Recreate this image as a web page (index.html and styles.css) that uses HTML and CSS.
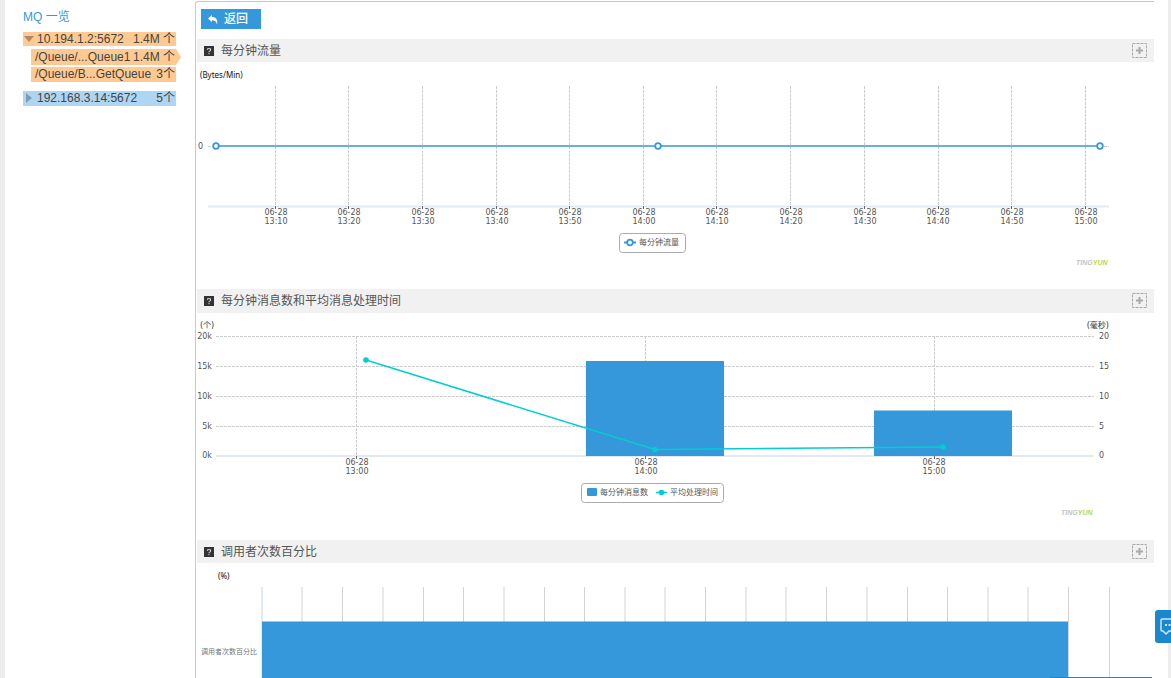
FILE: index.html
```html
<!DOCTYPE html>
<html lang="zh-CN">
<head>
<meta charset="utf-8">
<title>MQ 一览</title>
<link rel="stylesheet" href="styles.css">
</head>
<body>
<div class="page">
  <nav class="sidebar">
    <h1 class="sidebar-title">MQ 一览</h1>
    <a class="node hot" href="#"><svg class="caret" viewBox="0 0 10 10"><path d="M0 2h10L5 8z"/></svg><span class="name">10.194.1.2:5672</span><span>1.4M 个</span></a>
    <a class="node hot child current" href="#"><span class="name">/Queue/...Queue1</span><span>1.4M 个</span></a>
    <a class="node hot child" href="#"><span class="name">/Queue/B...GetQueue</span><span>3个</span></a>
    <a class="node cool" href="#"><svg class="caret" viewBox="0 0 10 10"><path d="M2 0v10l6-5z"/></svg><span class="name">192.168.3.14:5672</span><span>5个</span></a>
  </nav>
  <main class="main">
    <div class="toolbar">
      <button class="back" type="button"><svg class="back-icon" viewBox="0 0 10 10"><path d="M0 3.5 4 0v2c4 0 6 2.500 5 7.500C8.300 6.500 7 5.200 4 5.200V7z"/></svg>返回</button>
    </div>

    <section class="panel">
      <header class="bar">
        <svg class="help" viewBox="0 0 10 10"><path class="help-box" d="M0 0h10v10H0z"/><path class="help-mark" d="M3.500 3.800V2.700h3v2.100L5 5.400v.9M5 7v1.200"/></svg>
        <h2 class="bar-title">每分钟流量</h2>
        <button class="add" type="button" aria-label="添加"><svg class="add-icon" viewBox="0 0 15 15"><path class="add-box" d="M.5.5h14v14H.5z"/><path class="add-plus" d="M4 7.500h7M7.500 4v7"/></svg></button>
      </header>
      <svg class="chart" viewBox="197 62 957 227">
        <text class="unit" x="200" y="78">(Bytes/Min)</text>
        <path class="grid" d="M275.500 86V206M348.500 86V206M422.500 86V206M496.500 86V206M569.500 86V206M643.500 86V206M716.500 86V206M790.500 86V206M864.500 86V206M938.500 86V206M1011.500 86V206M1085.500 86V206M208 146.500H1109"/>
        <path class="axis" d="M208 206.500H1109"/>
        <path class="tick" d="M275.500 206v3M348.500 206v3M422.500 206v3M496.500 206v3M569.500 206v3M643.500 206v3M716.500 206v3M790.500 206v3M864.500 206v3M938.500 206v3M1011.500 206v3M1085.500 206v3"/>
        <path class="flow" d="M216 146H1100"/>
        <g class="ring"><circle cx="216" cy="146" r="2.800"/><circle cx="658" cy="146" r="2.800"/><circle cx="1100" cy="146" r="2.800"/></g>
        <text class="label" x="198" y="149">0</text>
        <g class="label mid">
          <text x="276" y="215">06-28</text><text x="276" y="224">13:10</text>
          <text x="349" y="215">06-28</text><text x="349" y="224">13:20</text>
          <text x="423" y="215">06-28</text><text x="423" y="224">13:30</text>
          <text x="497" y="215">06-28</text><text x="497" y="224">13:40</text>
          <text x="570" y="215">06-28</text><text x="570" y="224">13:50</text>
          <text x="644" y="215">06-28</text><text x="644" y="224">14:00</text>
          <text x="717" y="215">06-28</text><text x="717" y="224">14:10</text>
          <text x="791" y="215">06-28</text><text x="791" y="224">14:20</text>
          <text x="865" y="215">06-28</text><text x="865" y="224">14:30</text>
          <text x="938" y="215">06-28</text><text x="938" y="224">14:40</text>
          <text x="1012" y="215">06-28</text><text x="1012" y="224">14:50</text>
          <text x="1086" y="215">06-28</text><text x="1086" y="224">15:00</text>
        </g>
        <rect class="legend" x="619.500" y="233.500" width="66" height="19" rx="3"/>
        <path class="flow-key" d="M624 242.500h12"/>
        <g class="ring"><circle cx="630" cy="242.500" r="2.800"/></g>
        <text class="label" x="639" y="245">每分钟流量</text>
        <text class="brand" x="1076" y="265">TING<tspan class="brand-green">YUN</tspan></text>
      </svg>
    </section>

    <section class="panel">
      <header class="bar bar-tall">
        <svg class="help" viewBox="0 0 10 10"><path class="help-box" d="M0 0h10v10H0z"/><path class="help-mark" d="M3.500 3.800V2.700h3v2.100L5 5.400v.9M5 7v1.200"/></svg>
        <h2 class="bar-title">每分钟消息数和平均消息处理时间</h2>
        <button class="add" type="button" aria-label="添加"><svg class="add-icon" viewBox="0 0 15 15"><path class="add-box" d="M.5.5h14v14H.5z"/><path class="add-plus" d="M4 7.500h7M7.500 4v7"/></svg></button>
      </header>
      <svg class="chart" viewBox="197 313 957 227">
        <text class="label dark" x="200" y="328">(个)</text>
        <text class="label dark end-text" x="1109" y="328">(毫秒)</text>
        <path class="grid" d="M216 336.500H1094M216 366.500H1094M216 396.500H1094M216 426.500H1094M356.500 336V456M645.500 336V456M934.500 336V456"/>
        <path class="axis" d="M216 456H1094"/>
        <path class="tick" d="M356.500 456v3M645.500 456v3M934.500 456v3"/>
        <path class="bar-fill" d="M586 361h138v95H586zM874 410.500h138V456H874z"/>
        <path class="time" d="M366 360 655 449.500 943 447"/>
        <g class="dot"><circle cx="366" cy="360" r="2.800"/><circle cx="655" cy="449.500" r="2.800"/><circle cx="943" cy="447" r="2.800"/></g>
        <g class="label end-text">
          <text x="212" y="339">20k</text><text x="212" y="369">15k</text><text x="212" y="399">10k</text><text x="212" y="429">5k</text><text x="212" y="458">0k</text>
        </g>
        <g class="label">
          <text x="1099" y="339">20</text><text x="1099" y="369">15</text><text x="1099" y="399">10</text><text x="1099" y="429">5</text><text x="1099" y="458">0</text>
        </g>
        <g class="label mid">
          <text x="357" y="465">06-28</text><text x="357" y="474">13:00</text>
          <text x="646" y="465">06-28</text><text x="646" y="474">14:00</text>
          <text x="934" y="465">06-28</text><text x="934" y="474">15:00</text>
        </g>
        <rect class="legend" x="581.500" y="483.500" width="142" height="19" rx="3"/>
        <rect class="bar-fill" x="587" y="488" width="10" height="8" rx="1"/>
        <text class="label" x="600" y="495">每分钟消息数</text>
        <path class="time" d="M656 492.500h11"/>
        <g class="dot"><circle cx="661.500" cy="492.500" r="2.800"/></g>
        <text class="label" x="670" y="495">平均处理时间</text>
        <text class="brand" x="1061" y="515">TING<tspan class="brand-green">YUN</tspan></text>
      </svg>
    </section>

    <section class="panel">
      <header class="bar">
        <svg class="help" viewBox="0 0 10 10"><path class="help-box" d="M0 0h10v10H0z"/><path class="help-mark" d="M3.500 3.800V2.700h3v2.100L5 5.400v.9M5 7v1.200"/></svg>
        <h2 class="bar-title">调用者次数百分比</h2>
        <button class="add" type="button" aria-label="添加"><svg class="add-icon" viewBox="0 0 15 15"><path class="add-box" d="M.5.5h14v14H.5z"/><path class="add-plus" d="M4 7.500h7M7.500 4v7"/></svg></button>
      </header>
      <svg class="chart" viewBox="197 563 957 115">
        <text class="unit" x="218" y="579">(%)</text>
        <path class="axis" d="M262 587V678"/>
        <path class="rule" d="M302 587V622M342.500 587V622M383 587V622M423.500 587V622M463.500 587V622M504 587V622M544.500 587V622M584.500 587V622M625 587V622M665 587V622M705.500 587V622M746 587V622M786 587V622M826.500 587V622M867 587V622M907.500 587V622M947.500 587V622M988 587V622M1028 587V622M1068.500 587V678M1109.500 587V678"/>
        <path class="bar-fill" d="M262 621.500h806V678H262z"/>
        <path class="edge" d="M1050 677.500H1152"/>
        <text class="row-label" x="257" y="654">调用者次数百分比</text>
      </svg>
    </section>
  </main>
</div>
<button class="feedback" type="button" aria-label="反馈"><svg class="feedback-icon" viewBox="0 0 18 18"><path class="bubble" d="M2 1h14q1 0 1 1v10q0 1-1 1H9l-3 3-3-3H2q-1 0-1-1V2q0-1 1-1z"/><path class="bubble-dots" d="M5 6h2v2H5zM8.500 6h2v2h-2zM12 6h2v2h-2z"/></svg></button>
</body>
</html>
```
FILE: styles.css
```css
* { box-sizing: border-box; }
body {
  margin: 0;
  background: #ededed;
  color: #444;
  font: 12px/15px "Liberation Sans", "Noto Sans CJK SC", sans-serif;
}
h1, h2 { margin: 0; font-size: 12px; font-weight: 400; }
button { border: 0; padding: 0; font: inherit; cursor: pointer; }
svg { display: block; }

.page {
  display: flex;
  min-height: 100vh;
  margin: 0 3px 0 5px;
  padding-right: 14px;
  background: #fff;
}
.sidebar {
  flex: 0 0 190px;
  display: flex;
  flex-direction: column;
  padding: 9px 19px 0 18px;
}
.sidebar-title { line-height: 16px; margin: 0 0 7px; color: #3598db; }
.node {
  position: relative;
  display: flex;
  height: 14px;
  padding-right: 1px;
  line-height: 14px;
  color: #444;
  text-decoration: none;
  white-space: nowrap;
}
.name { flex: 1; }
.hot { background: #ffca91; }
.cool { height: 15px; margin-top: 9px; background: #aed6f3; }
.child { height: 15px; margin: 3px 0 0 8px; padding-left: 4px; }
.current { height: 16px; line-height: 16px; }
.current + .child { margin-top: 2px; }
.current::after {
  content: "";
  position: absolute;
  left: 100%;
  top: 0;
  border: solid transparent;
  border-width: 8px 0 8px 5px;
  border-left-color: #ffca91;
}
.caret { width: 10px; height: 10px; margin: 2px 3px 0 1px; fill: #b18b5f; }
.cool .caret { fill: #7e9db5; }

.main {
  flex: 1;
  min-width: 0;
  margin-top: 1px;
  padding-left: 1px;
  border: solid #c8c8c8;
  border-width: 1px 0 0 1px;
  border-top-left-radius: 3px;
}
.toolbar { padding: 7px 4px 10px; }
.back {
  display: flex;
  align-items: center;
  gap: 6px;
  width: 60px;
  height: 20px;
  padding: 1px 0 0 7px;
  background: #3598db;
  color: #fff;
  font-weight: 500;
}
.back-icon { width: 10px; height: 10px; fill: #fff; }
.bar {
  display: flex;
  align-items: center;
  gap: 7px;
  height: 23px;
  padding: 0 7px;
  background: #f1f1f1;
}
.bar-tall { height: 24px; padding-bottom: 1px; }
.help { width: 10px; height: 10px; }
.help-box { fill: #333; }
.help-mark { fill: none; stroke: #ddd; }
.bar-title { flex: 1; padding-top: 2px; color: #555; }
.add { background: none; }
.add-icon { width: 15px; height: 15px; fill: none; }
.add-box { stroke: #aaa; stroke-dasharray: 3 1; }
.add-plus { stroke: #aaa; stroke-width: 2; }

.chart {
  width: 100%;
  font-family: "DejaVu Sans", "Noto Sans CJK SC", sans-serif;
  font-size: 8px;
}
.grid { fill: none; stroke: #ccc; stroke-dasharray: 3 1; }
.axis { stroke: #e3e9f1; stroke-width: 2; }
.tick { stroke: #666; }
.rule { stroke: #d3d3d3; }
.edge { stroke: #1b87cd; }
.flow { stroke: #66b1df; stroke-width: 2; }
.flow-key { stroke: #3598db; stroke-width: 2; }
.ring { fill: #fff; stroke: #3598db; stroke-width: 1.800; }
.bar-fill { fill: #3598db; }
.time { fill: none; stroke: #00ced1; stroke-width: 1.500; }
.dot { fill: #00ced1; }
.label { fill: #555; }
.dark { fill: #333; }
.mid { text-anchor: middle; }
.end-text { text-anchor: end; }
.unit { fill: #111; font-family: "Noto Sans", sans-serif; }
.legend { fill: #fff; stroke: #aaa; }
.row-label { fill: #777; font-size: 7px; text-anchor: end; }
.brand {
  fill: #c4c4c4;
  font: italic 700 7px "Liberation Sans", sans-serif;
}
.brand-green { fill: #b1d84c; }

.feedback {
  position: fixed;
  right: 0;
  top: 610px;
  width: 16px;
  height: 33px;
  padding-left: 5px;
  overflow: hidden;
  border-radius: 3px 0 0 3px;
  background: #1b87cd;
}
.feedback-icon { width: 18px; height: 18px; fill: none; }
.bubble { stroke: #cfe6f6; stroke-width: 1.500; }
.bubble-dots { fill: #cfe6f6; }
```
